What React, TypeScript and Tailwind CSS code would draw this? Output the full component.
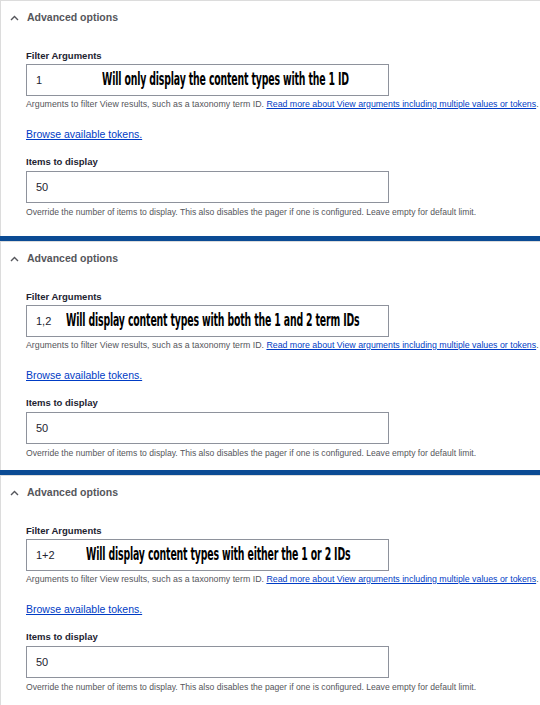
import React from "react"

type PanelProps = {
  value: string
  note: string
  noteLeft: string
  bottom: string
  bar?: boolean
}

function Chevron() {
  return (
    <svg width="9" height="6" viewBox="0 0 9 6" className="mr-[8px]">
      <polyline points="1,5 4.5,1.5 8,5" fill="none" stroke="#55565b" strokeWidth="1.4" />
    </svg>
  )
}

function Panel({ value, note, noteLeft, bottom, bar = true }: PanelProps) {
  return (
    <div>
      <div className={`border-l border-t border-[#dcdcdc] bg-white ${bottom}`}>
        <div className="h-[34px] flex items-center pl-[9px]">
          <Chevron />
          <span className="text-[10.5px] font-bold text-[#55565b]">Advanced options</span>
        </div>
        <div className="pl-[25px]">
          <div className="mt-[14px] h-[14px] leading-[14px] text-[9.5px] font-bold text-[#222330]">Filter Arguments</div>
          <div className="relative mt-[1px] w-[363px] h-[32px] border border-[#8e929c] flex items-center pl-[9px] text-[11px] text-[#222330]">
            {value}
            <span className={`absolute top-[3px] ${noteLeft} origin-left scale-x-[0.535] whitespace-nowrap text-[17.5px] leading-[22px] font-bold text-black tracking-[-0.3px] [font-family:'DejaVu_Sans',sans-serif]`}>
              {note}
            </span>
          </div>
          <div className="mt-[2px] h-[12px] leading-[12px] text-[8.8px] text-[#55565b] whitespace-nowrap">
            Arguments to filter View results, such as a taxonomy term ID.{" "}
            <a href="#" className="text-[#003cc5] underline">Read more about View arguments including multiple values or tokens</a>.
          </div>
          <div className="mt-[15px] h-[16px] leading-[16px]">
            <a href="#" className="text-[10.5px] text-[#003cc5] underline">Browse available tokens.</a>
          </div>
          <div className="mt-[14px] h-[14px] leading-[14px] text-[9.5px] font-bold text-[#222330]">Items to display</div>
          <div className="mt-[2px] w-[363px] h-[32px] border border-[#8e929c] flex items-center pl-[9px] text-[11px] text-[#222330]">
            50
          </div>
          <div className="mt-[3px] h-[12px] leading-[12px] text-[8.6px] text-[#55565b] whitespace-nowrap">
            Override the number of items to display. This also disables the pager if one is configured. Leave empty for default limit.
          </div>
        </div>
      </div>
      {bar && <div className="h-[5px] bg-[#0b4b94]" />}
    </div>
  )
}

export default function App() {
  return (
    <div className="w-[540px] h-[705px] overflow-hidden bg-white [font-family:'Liberation_Sans',Arial,sans-serif]">
      <Panel value="1" note="Will only display the content types with the 1 ID" noteLeft="left-[75px]" bottom="pb-[18px]" />
      <Panel value="1,2" note="Will display content types with both the 1 and 2 term IDs" noteLeft="left-[39px]" bottom="pb-[11px]" />
      <Panel value="1+2" note="Will display content types with either the 1 or 2 IDs" noteLeft="left-[59px]" bottom="pb-[20px]" bar={false} />
    </div>
  )
}
